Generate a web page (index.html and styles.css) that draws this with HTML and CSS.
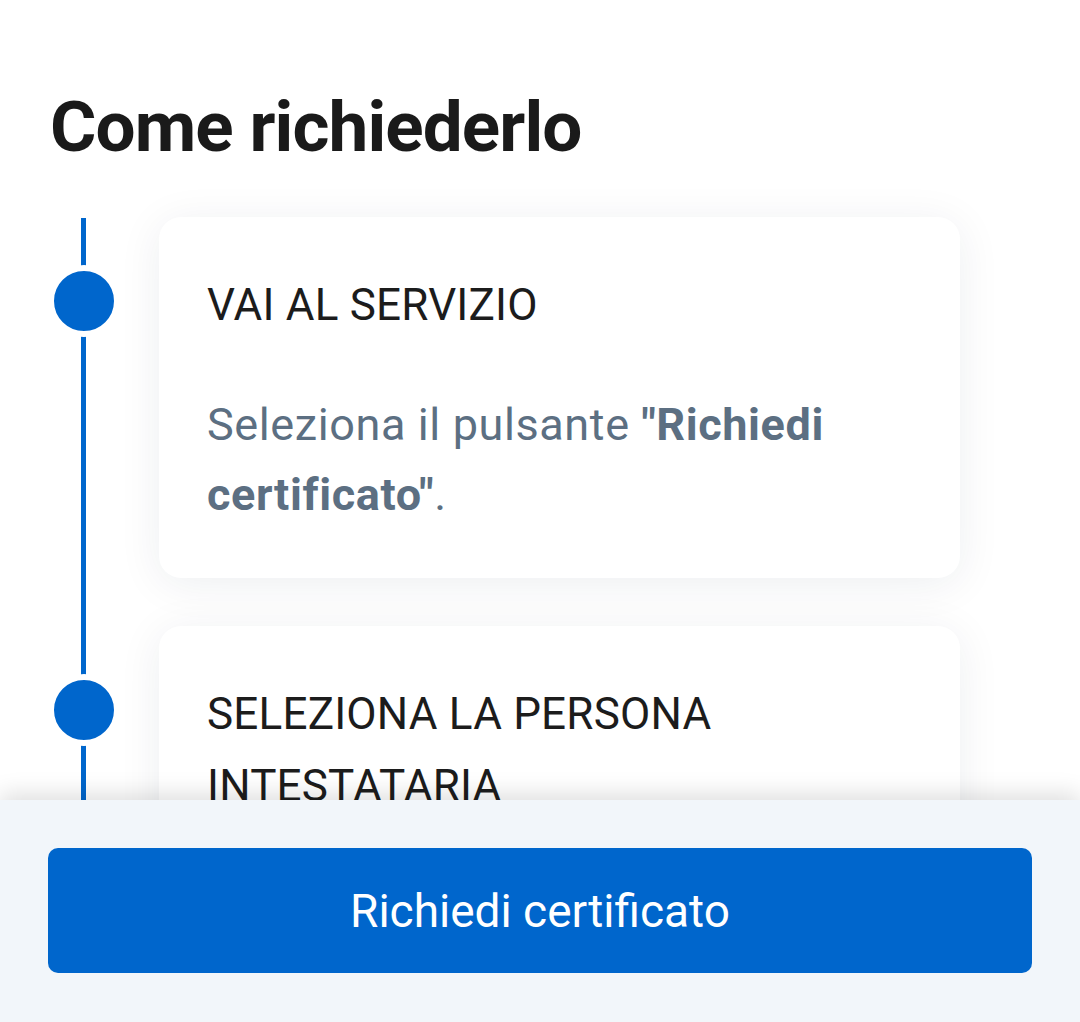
FILE: index.html
```html
<!DOCTYPE html>
<html lang="it">
<head>
<meta charset="utf-8">
<title>Come richiederlo</title>
<link rel="stylesheet" href="styles.css">
</head>
<body>
<main class="page">
  <h1 class="title">Come richiederlo</h1>
  <ol class="timeline">
    <li class="step">
      <span class="dot"></span>
      <div class="card">
        <h2 class="card-title">VAI AL SERVIZIO</h2>
        <p class="card-text">Seleziona il pulsante <strong>"Richiedi certificato"</strong>.</p>
      </div>
    </li>
    <li class="step">
      <span class="dot"></span>
      <div class="card card-last">
        <h2 class="card-title">SELEZIONA LA PERSONA INTESTATARIA</h2>
      </div>
    </li>
  </ol>
</main>
<footer class="action-bar">
  <button class="btn" type="button">Richiedi certificato</button>
</footer>
</body>
</html>
```

FILE: styles.css
```css
html, body {
  margin: 0;
  height: 100%;
  overflow: hidden;
}

body {
  background: #ffffff;
  font-family: Roboto, "Noto Sans", sans-serif;
  color: #1c1c1c;
}

.page {
  padding: 0 120px 0 48px;
}

.title {
  margin: 84px 0 47px 2px;
  font-size: 71px;
  line-height: 86px;
  font-weight: 700;
  letter-spacing: -0.9px;
  color: #1a1a1a;
}

.timeline {
  list-style: none;
  margin: 0;
  padding: 0;
  display: flex;
  flex-direction: column;
  gap: 48px;
  background: linear-gradient(#0066cc, #0066cc) no-repeat 33px 1px / 5px 100%;
}

.step {
  display: grid;
  grid-template-columns: 111px 1fr;
  align-items: start;
}

.dot {
  display: block;
  width: 60px;
  height: 60px;
  margin-top: 48px;
  border: 6px solid #ffffff;
  border-radius: 50%;
  background: #0066cc;
}

.card {
  background: #ffffff;
  border-radius: 22px;
  padding: 52px 48px 48px;
  box-shadow: 0 6px 44px rgba(20, 40, 70, 0.075);
}

.card-last {
  padding-bottom: 140px;
}

.card-title {
  margin: 0;
  font-size: 44px;
  line-height: 72px;
  font-weight: 400;
  letter-spacing: 0.2px;
  color: #1c1c1c;
}

.card-text {
  margin: 49px 0 0;
  font-size: 45px;
  line-height: 70px;
  letter-spacing: 0.6px;
  color: #5c6f82;
}

.card-text strong {
  font-weight: 700;
}

.action-bar {
  position: fixed;
  left: 0;
  right: 0;
  bottom: 0;
  height: 222px;
  box-sizing: border-box;
  padding: 48px 48px 0;
  background: #f2f6fa;
  box-shadow: 0 -6px 22px rgba(0, 0, 0, 0.13);
}

.btn {
  display: block;
  width: 100%;
  height: 125px;
  border: 0;
  border-radius: 10px;
  background: #0066cc;
  color: #ffffff;
  font-family: Roboto, "Noto Sans", sans-serif;
  font-size: 46px;
  font-weight: 400;
  cursor: pointer;
}
```
